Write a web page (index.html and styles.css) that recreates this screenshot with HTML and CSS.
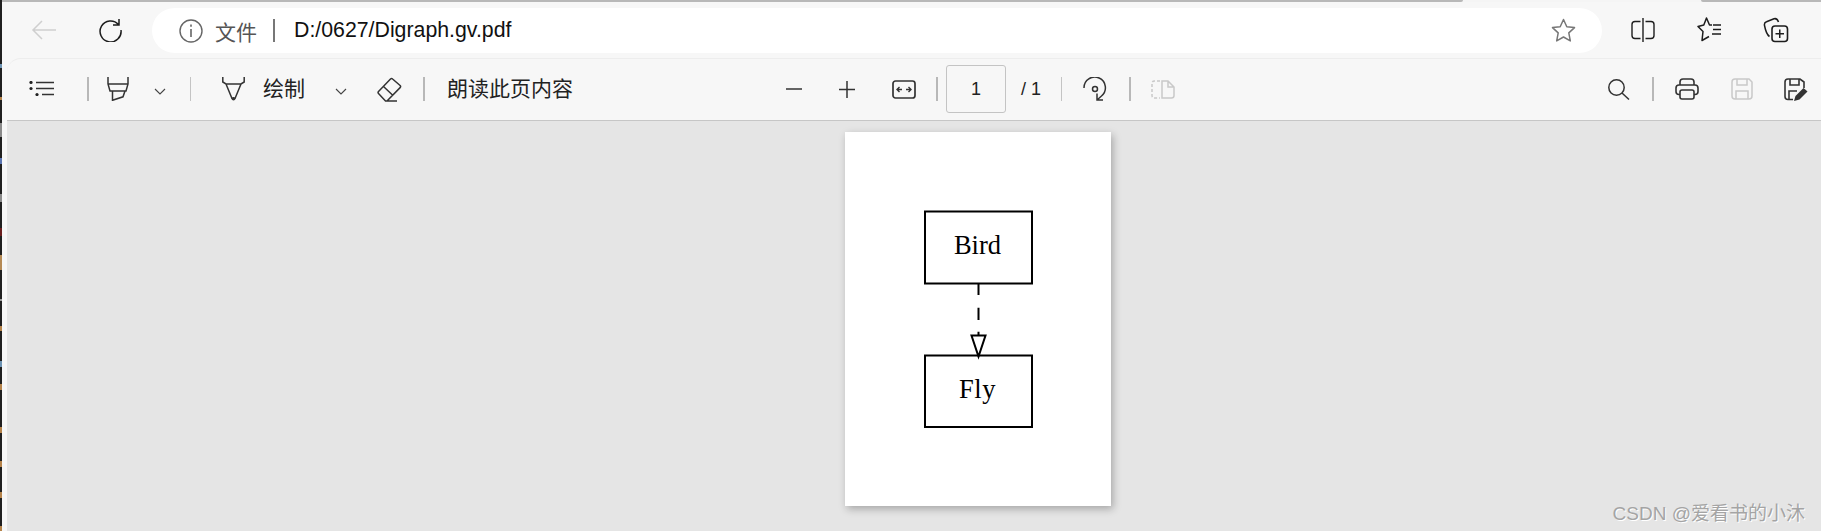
FILE: index.html
```html
<!DOCTYPE html>
<html lang="zh">
<head>
<meta charset="utf-8">
<title>Digraph.gv.pdf</title>
<link rel="stylesheet" href="styles.css">
</head>
<body>
<div class="edge"></div>
<div class="window">
  <div class="scrollbar"><div class="thumb"></div><div class="thumb thumb-end"></div></div>
  <header class="browserbar">
    <svg class="back" width="28" height="24" viewBox="0 0 28 24"><path d="M27 12H4M13 3l-9 9 9 9" fill="none" stroke="#cfcfcf" stroke-width="1.500"/></svg>
    <svg class="reload" width="24" height="24" viewBox="0 0 24 24"><path d="M20.500 6.500A10.500 10.500 0 1 0 23 12M21 1v6h-6" fill="none" stroke="#1d1d1d" stroke-width="1.500"/></svg>
    <div class="address">
      <svg class="info" width="24" height="24" viewBox="0 0 24 24"><circle cx="12" cy="12" r="11" fill="none" stroke="#666" stroke-width="1.400"/><path d="M12 10v8M12 5.500v2.200" stroke="#666" stroke-width="1.600"/></svg>
      <span class="scheme">文件</span>
      <span class="addr-sep"></span>
      <span class="url">D:/0627/Digraph.gv.pdf</span>
      <svg class="star" width="25" height="25" viewBox="0 0 25 25"><path d="M12.500 1.500l3.300 7.200 7.700.9-5.700 5.300 1.500 8L12.500 19l-6.800 3.900 1.500-8L1.500 9.600l7.700-.9z" fill="none" stroke="#777" stroke-width="1.500" stroke-linejoin="round"/></svg>
    </div>
    <svg class="split" width="24" height="24" viewBox="0 0 24 24"><path d="M9.500 3.500H4a3 3 0 0 0-3 3v11a3 3 0 0 0 3 3h5.500M14.500 3.500H20a3 3 0 0 1 3 3v11a3 3 0 0 1-3 3h-5.500M12 0v24" fill="none" stroke="#1d1d1d" stroke-width="1.400"/></svg>
    <svg class="favs" width="26" height="26" viewBox="0 0 26 26"><path d="M15 8h-2.500L9.500 1 6.800 8 1 9.500l5 5L5 23.500l7-4" fill="none" stroke="#1d1d1d" stroke-width="1.500" stroke-linejoin="round"/><path d="M16 8h8M16 12.500h8M15 17h9" stroke="#1d1d1d" stroke-width="1.500"/></svg>
    <svg class="colls" width="26" height="26" viewBox="0 0 26 26"><path d="M6.500 19.500C4 18 3 16 1.500 8.500c-.4-2 .5-3.200 2-3.700L11 1.800c2-.6 3.500.2 4.500 3.200" fill="none" stroke="#1d1d1d" stroke-width="1.500"/><rect x="9" y="9" width="15.500" height="15.500" rx="3" fill="none" stroke="#1d1d1d" stroke-width="1.600"/><path d="M16.750 12.500v8.500M12.500 16.750H21" stroke="#1d1d1d" stroke-width="1.500"/></svg>
  </header>
  <nav class="pdfbar">
    <div class="group group-left">
      <svg class="list" width="26" height="15" viewBox="0 0 26 15"><path d="M7 1.500h18M7 7.500h18M13 13.500h12" stroke="#333" stroke-width="1.500"/><circle cx="2" cy="1.500" r="1.600" fill="#222"/><circle cx="2" cy="7.500" r="1.600" fill="#222"/><circle cx="8" cy="13.500" r="1.600" fill="#222"/></svg>
      <span class="sep s1"></span>
      <svg class="hl" width="22" height="24" viewBox="0 0 22 24"><path d="M1 0v7l2 7h16l2-7V0M1 7h20M5.500 14v9.300l10.500-3.500 2-5.800" fill="none" stroke="#333" stroke-width="1.500"/></svg>
      <svg class="chev c1" width="12" height="7" viewBox="0 0 12 7"><path d="M1 1l5 5 5-5" fill="none" stroke="#444" stroke-width="1.100"/></svg>
      <span class="thin s2"></span>
      <svg class="pen" width="23" height="24" viewBox="0 0 23 24"><path d="M.8 0v5l3.200 2h15L22.200 5V0M4 7l6 14.500h3L19 7" fill="none" stroke="#333" stroke-width="1.500"/><circle cx="11.500" cy="21.800" r="1.800" fill="#333"/></svg>
      <span class="label draw">绘制</span>
      <svg class="chev c2" width="12" height="7" viewBox="0 0 12 7"><path d="M1 1l5 5 5-5" fill="none" stroke="#444" stroke-width="1.100"/></svg>
      <svg class="eraser" width="25" height="25" viewBox="0 0 25 25"><path d="M1.500 14.500L13.500 2a1.500 1.500 0 0 1 2.100 0l7.500 6.500a1.500 1.500 0 0 1 0 2.100L10 24h-1.500l-7-7.500a1.500 1.500 0 0 1 0-2zM6.500 9.500L15.500 18M9 24h11" fill="none" stroke="#333" stroke-width="1.500" stroke-linejoin="round"/></svg>
      <span class="sep s3"></span>
      <span class="label read">朗读此页内容</span>
    </div>
    <div class="group group-mid">
      <svg class="zoom-out" width="16" height="2" viewBox="0 0 16 2"><path d="M0 1h16" stroke="#333" stroke-width="1.500"/></svg>
      <svg class="zoom-in" width="16" height="17" viewBox="0 0 16 17"><path d="M0 8.500h16M8 0v17" stroke="#333" stroke-width="1.500"/></svg>
      <svg class="fit" width="24" height="19" viewBox="0 0 24 19"><rect x="1" y="1" width="22" height="17" rx="2.500" fill="none" stroke="#333" stroke-width="1.700"/><path d="M5 9.500h5M19 9.500h-5M7.500 7L5 9.500 7.500 12M16.500 7L19 9.500 16.500 12" fill="none" stroke="#333" stroke-width="1.400"/></svg>
      <span class="sep s4"></span>
      <span class="pagebox">1</span>
      <span class="pagecount">/ 1</span>
      <span class="thin s5"></span>
      <svg class="rotate" width="24" height="24" viewBox="0 0 24 24"><path d="M1 11A10.700 10.700 0 1 1 18.500 19l-4.500 4M14 16.500V23h6" fill="none" stroke="#333" stroke-width="1.500"/><circle cx="12" cy="12" r="2.500" fill="none" stroke="#333" stroke-width="1.500"/></svg>
      <span class="sep s6"></span>
      <svg class="twopage" width="24" height="19" viewBox="0 0 24 19"><path d="M9 1H3.500Q1 1 1 3.500v12Q1 18 3.500 18H9" fill="none" stroke="#c9c9c9" stroke-width="1.500" stroke-dasharray="3 2"/><path d="M11 1h6l6 6v8.500q0 2.500-2.500 2.500H11zM17 1v6h6" fill="none" stroke="#c9c9c9" stroke-width="1.500"/></svg>
    </div>
    <div class="group group-right">
      <svg class="search" width="22" height="21" viewBox="0 0 22 21"><circle cx="8.500" cy="8.500" r="7.700" fill="none" stroke="#333" stroke-width="1.500"/><path d="M14 14l7 6.500" stroke="#333" stroke-width="1.500"/></svg>
      <span class="sep s7"></span>
      <svg class="print" width="24" height="22" viewBox="0 0 24 22"><path d="M5 7V4q0-3 3-3h8q3 0 3 3v3M5 16.500H4q-3 0-3-3V10q0-3 3-3h16q3 0 3 3v3.500q0 3-3 3h-1" fill="none" stroke="#333" stroke-width="1.600"/><rect x="5" y="12" width="14" height="9" rx="2" fill="#f7f7f7" stroke="#333" stroke-width="1.600"/></svg>
      <svg class="save" width="22" height="22" viewBox="0 0 22 22"><path d="M4 1h14l3 3v14q0 3-3 3H4q-3 0-3-3V4q0-3 3-3zM6 1v6h10V1M5 21v-8h12v8" fill="none" stroke="#c9c9c9" stroke-width="1.500"/></svg>
      <svg class="saveas" width="24" height="23" viewBox="0 0 24 23"><path d="M9 21.500H4q-3 0-3-3V4q0-3 3-3h12l4 3v6M6 1v6h9V1M5 21V13h8" fill="none" stroke="#333" stroke-width="1.600"/><path d="M10 23l1.500-5 8-8 4 3.500-8 8z" fill="#333"/></svg>
    </div>
  </nav>
  <main class="viewer">
    <div class="page">
      <svg class="graph" width="266" height="374" viewBox="0 0 266 374">
        <rect x="80" y="79.500" width="107" height="72" fill="none" stroke="#000" stroke-width="2"/>
        <rect x="80" y="223.500" width="107" height="71.500" fill="none" stroke="#000" stroke-width="2"/>
        <path d="M133.500 152v11M133.500 175.700V188M133.500 199.700V204" stroke="#000" stroke-width="2" fill="none"/>
        <path d="M126.500 203.500h14l-7 21z" fill="#fff" stroke="#000" stroke-width="2"/>
        <text class="node" x="132.500" y="122" text-anchor="middle">Bird</text>
        <text class="node node-fly" x="132.500" y="266" text-anchor="middle">Fly</text>
      </svg>
    </div>
    <span class="watermark">CSDN @爱看书的小沐</span>
  </main>
</div>
</body>
</html>
```
FILE: styles.css
```css
* { box-sizing: border-box; }
html, body { margin: 0; padding: 0; height: 100%; overflow: hidden; }
body { width: 1821px; height: 531px; display: flex; background: #f7f7f7; color: #222; font-family: "Liberation Sans", "Noto Sans CJK SC", sans-serif; }
svg { display: block; flex: none; }

.edge {
  width: 2px; flex: none;
  background: linear-gradient(to bottom,
    #202020 0 64px, #6d93b3 64px 68px, #202020 68px 97px, #b5834a 97px 100px,
    #202020 100px 123px, #8a8a8a 123px 137px, #202020 137px 158px, #5a74b0 158px 164px,
    #202020 164px 194px, #8a8a8a 194px 202px, #202020 202px 228px, #6b1f1f 228px 236px,
    #202020 236px 255px, #b58a55 255px 270px, #202020 270px 299px, #9a9a9a 299px 301px,
    #202020 301px 326px, #b5834a 326px 331px, #202020 331px 361px, #6d93b3 361px 367px,
    #202020 367px 384px, #b5834a 384px 390px, #202020 390px 427px, #b5834a 427px 433px,
    #202020 433px 461px, #b5834a 461px 467px, #202020 467px 492px, #b5834a 492px 498px,
    #202020 498px 526px, #b5834a 526px 531px);
}
.window { flex: 1; min-width: 0; display: flex; flex-direction: column; background: #f7f7f7; }

.scrollbar { height: 2px; flex: none; display: flex; justify-content: space-between; background: #f5f5f5; }
.thumb { width: 1461px; background: #b8b8b8; border-radius: 0 0 2px 0; }
.thumb-end { width: 120px; border-radius: 0 0 0 2px; }

.browserbar { height: 56px; flex: none; display: flex; align-items: center; padding-left: 27px; }
.reload { margin-left: 41px; }
.address { flex: none; width: 1450px; height: 45px; margin: 1px 0 0 30px; padding: 0 26px 0 27px; background: #fff; border-radius: 23px; display: flex; align-items: center; }
.scheme { margin-left: 12px; font-size: 21px; color: #555; }
.addr-sep { width: 2px; height: 23px; margin: 0 19px 0 16px; background: #777; }
.url { font-size: 21.300px; color: #111; }
.star { margin-left: auto; }
.split { margin-left: 29px; }
.favs { margin-left: 42px; }
.colls { margin-left: 40px; }

.pdfbar { flex: none; height: 63px; margin-left: 5px; padding-bottom: 1px; display: flex; align-items: center; background: #f7f7f7; border-top: 1px solid #ededed; border-bottom: 1px solid #c6c6c6; border-top-left-radius: 14px; }
.group { display: flex; align-items: center; }
.group-left { padding-left: 22px; }
.group-mid { margin-left: 213px; }
.group-right { margin-left: auto; padding-right: 13px; }

.sep { flex: none; width: 2px; height: 24px; background: #b8b8b8; }
.thin { flex: none; width: 1px; height: 24px; background: #c4c4c4; }
.label { font-size: 21px; line-height: 28px; color: #222; }

.list { margin-top: -2px; }
.s1 { margin-left: 32px; }
.hl { margin-left: 18px; }
.chev { margin-top: 4px; }
.c1 { margin-left: 25px; }
.s2 { margin-left: 24px; }
.pen { margin-left: 31px; }
.draw { margin-left: 18px; }
.c2 { margin-left: 30px; }
.eraser { margin-left: 30px; }
.s3 { margin-left: 21px; }
.read { margin-left: 22px; }

.zoom-in { margin-left: 37px; }
.fit { margin-left: 37px; }
.s4 { margin-left: 20px; }
.pagebox { flex: none; width: 60px; height: 48px; margin-left: 8px; border: 1px solid #c4c4c4; border-radius: 3px; font-size: 18px; line-height: 46px; text-align: center; color: #222; }
.pagecount { margin-left: 15px; font-size: 18px; color: #222; }
.s5 { margin-left: 20px; }
.rotate { margin-left: 21px; }
.s6 { margin-left: 22px; }
.twopage { margin-left: 20px; }

.s7 { margin-left: 22px; }
.print { margin-left: 21px; }
.save { margin-left: 32px; }
.saveas { margin-left: 31px; }

.viewer { flex: 1; min-height: 0; margin-left: 5px; padding: 11px 0 0 838px; background: #e5e5e5; position: relative; overflow: hidden; }
.page { width: 266px; height: 374px; background: #fff; box-shadow: 2px 3px 8px rgba(0,0,0,.28); }
.node { font-family: "Liberation Serif", serif; font-size: 26.500px; fill: #000; }
.node-fly { letter-spacing: .6px; }
.watermark { position: absolute; right: 16px; bottom: 6px; font-size: 19px; color: #a4a4a4; text-shadow: 1px 1px 0 #fff; }
```
